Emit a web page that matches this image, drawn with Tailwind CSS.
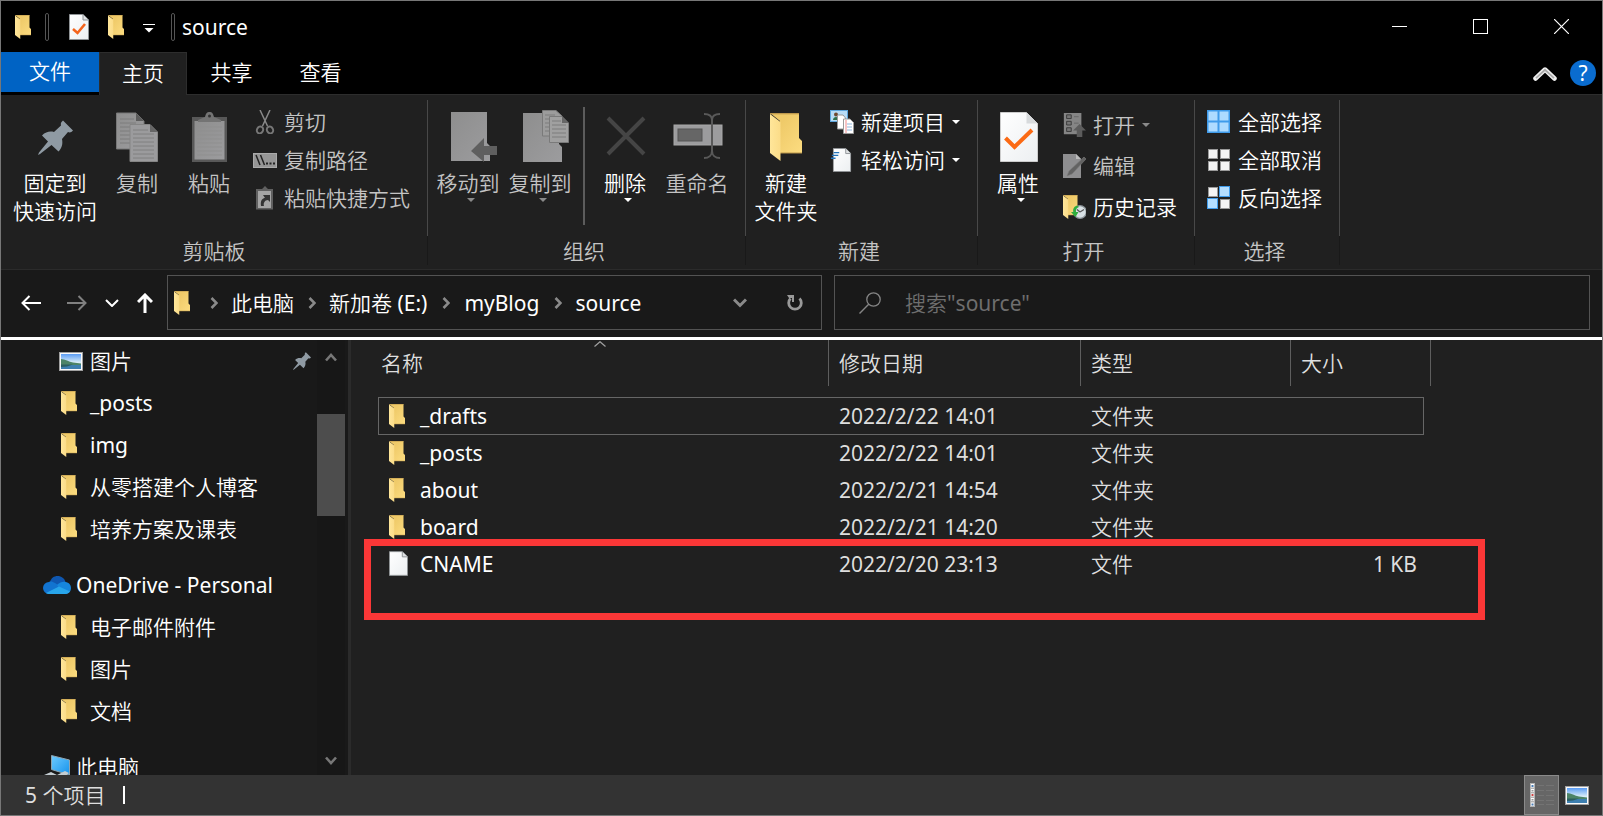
<!DOCTYPE html>
<html lang="zh-CN">
<head>
<meta charset="utf-8">
<title>source</title>
<script src="https://cdn.jsdelivr.net/npm/@tailwindcss/browser@4"></script>
</head>
<body class="h-screen overflow-hidden bg-[#202020] font-['Noto_Sans','Noto_Sans_CJK_SC_DemiLight','Noto_Sans_CJK_SC_Light','Noto_Sans_CJK_SC',sans-serif] text-[21px] leading-7 text-white">

<svg class="absolute size-0" aria-hidden="true">
  <defs>
    <linearGradient id="gBack" x1="0" y1="0" x2="1" y2="1"><stop offset="0.3" stop-color="#efca69"/><stop offset="1" stop-color="#fcdc80"/></linearGradient>
    <linearGradient id="gFlap" x1="0" y1="0" x2="1" y2="0"><stop offset="0" stop-color="#ffe69a"/><stop offset="1" stop-color="#fbdc88"/></linearGradient>
    <linearGradient id="gPage" x1="0" y1="0" x2="1" y2="1"><stop offset="0" stop-color="#ffffff"/><stop offset="1" stop-color="#eceff1"/></linearGradient>
    <linearGradient id="gGrey" x1="0" y1="0" x2="1" y2="1"><stop offset="0" stop-color="#8e8e8e"/><stop offset="1" stop-color="#9c9c9e"/></linearGradient>
    <linearGradient id="gSky" x1="0" y1="0" x2="0" y2="1"><stop offset="0" stop-color="#5b9df5"/><stop offset="0.55" stop-color="#d6ebf8"/><stop offset="1" stop-color="#e6f3f8"/></linearGradient>
    <linearGradient id="gScreen" x1="0" y1="0" x2="1" y2="1"><stop offset="0" stop-color="#6ecbff"/><stop offset="1" stop-color="#1492ec"/></linearGradient>
    <symbol id="folder" viewBox="0 0 32 48">
      <path d="M0 0H29V25L32 28V40H10V8Z" fill="url(#gBack)"/>
      <path d="M0 .7H29" stroke="#b8944a" stroke-width="1.2"/>
      <path d="M10 40H32" stroke="#b8944a" stroke-width="1"/>
      <path d="M0 1L10.500 9V48L0 40Z" fill="url(#gFlap)"/>
    </symbol>
    <symbol id="page" viewBox="0 0 20 26">
      <path d="M.5 .5H14L19.500 6V25.500H.5Z" fill="url(#gPage)" stroke="#8f9396"/>
      <path d="M14 .5V6H19.500" fill="#dfe2e4" stroke="#8f9396"/>
    </symbol>
    <symbol id="pin" viewBox="0 0 35 35">
      <path d="M25 .5L35 10.500C33.500 12.500 31.500 13 30 12L24 19C25 24 24 28 20.500 31.500L13.500 25L2 34L0 35L1 32.500L10 21.500L4 15.500C8 11.500 12 11 16 12L23 5.500C22.500 3.500 23 2 25 .5Z" fill="#8f9aa3"/>
    </symbol>
    <symbol id="photo" viewBox="0 0 24 19">
      <rect x=".5" y=".5" width="23" height="18" fill="#fafafa" stroke="#a0a0a0"/>
      <rect x="2" y="2" width="20" height="15" fill="url(#gSky)"/>
      <path d="M2 7C6 7 10 10 14 10.500L22 11.500V13H2Z" fill="#4c8468"/>
      <path d="M2 13H22V17H2Z" fill="#3d7fb0"/><path d="M2 12.500H14L8 14.500L2 15Z" fill="#2c5f62"/>
    </symbol>
    <symbol id="down" viewBox="0 0 8 4"><path d="M0 0H8L4 4Z" fill="currentColor"/></symbol>
    <symbol id="crumb" viewBox="0 0 8 12"><path d="M1.500 1L6.500 6L1.500 11" fill="none" stroke="#8a8a8a" stroke-width="2.600"/></symbol>
    <symbol id="tileW" viewBox="0 0 11 11"><rect x=".5" y=".5" width="10" height="10" fill="#f4f4f4" stroke="#9b9b9b"/></symbol>
    <symbol id="tileB" viewBox="0 0 11 11"><rect x=".5" y=".5" width="10" height="10" fill="#b4deff" stroke="#3f9bea"/></symbol>
  </defs>
</svg>

<div class="flex h-full flex-col border border-[#777]">

  <!-- Title bar -->
  <header class="flex h-[51px] shrink-0 items-center bg-black">
    <svg class="ml-[14px] h-6 w-4"><use href="#folder"/></svg>
    <span class="ml-[14px] h-7 w-1 rounded-sm border border-[#555]"></span>
    <button aria-label="属性" class="ml-5"><svg class="block h-[26px] w-5" viewBox="0 0 20 26"><use href="#page"/><path d="M4 15L8.500 19L16 10" fill="none" stroke="#f4641c" stroke-width="2.600"/></svg></button>
    <button aria-label="新建文件夹" class="ml-[19px]"><svg class="block h-6 w-4"><use href="#folder"/></svg></button>
    <button aria-label="自定义快速访问工具栏" class="ml-[19px] pt-[3px]"><svg class="block h-[9px] w-3" viewBox="0 0 12 9"><path d="M0 .5H12" stroke="#fff"/><path d="M1.500 4H10.500L6 8.500Z" fill="#fff"/></svg></button>
    <span class="ml-4 h-7 w-1 rounded-sm border border-[#555]"></span>
    <h1 class="ml-[7px] flex-1">source</h1>
    <button aria-label="最小化" class="flex h-full w-[81px] items-center justify-center"><svg class="size-[15px]" viewBox="0 0 15 15"><path d="M0 7.500H15" stroke="#fff"/></svg></button>
    <button aria-label="最大化" class="flex h-full w-[81px] items-center justify-center"><svg class="size-[15px]" viewBox="0 0 15 15"><rect x=".5" y=".5" width="14" height="14" fill="none" stroke="#fff"/></svg></button>
    <button aria-label="关闭" class="flex h-full w-[81px] items-center justify-center"><svg class="size-[15px]" viewBox="0 0 15 15"><path d="M0 0L15 15M15 0L0 15" stroke="#fff" stroke-width="1.200"/></svg></button>
  </header>

  <!-- Ribbon tabs -->
  <div class="flex h-[43px] shrink-0 bg-black">
    <button class="h-10 w-[98px] bg-[#0063c4] pb-[2px]">文件</button>
    <button class="w-[88px] border border-b-0 border-[#2d2d2d] bg-[#202020] pb-[2px]">主页</button>
    <button class="w-[89px] border-b border-[#2d2d2d] pb-[2px]">共享</button>
    <button class="w-[89px] border-b border-[#2d2d2d] pb-[2px]">查看</button>
    <div class="flex flex-1 items-center justify-end gap-[13px] border-b border-[#2d2d2d] pr-[6px]">
      <button aria-label="折叠功能区"><svg class="block h-[15px] w-6" viewBox="0 0 24 15"><path d="M2.500 12.500L12 3.500L21.500 12.500" fill="none" stroke="#f0f0f0" stroke-width="4.500" stroke-linecap="round" stroke-linejoin="round"/><path d="M3 12.200L12 3.800L21 12.200" fill="none" stroke="#aaa" stroke-width="1.800"/></svg></button>
      <button aria-label="帮助" class="flex size-[26px] items-center justify-center rounded-full bg-[#0a6ccf] leading-6">?</button>
    </div>
  </div>

  <!-- Ribbon -->
  <div class="flex h-[175px] shrink-0 border-b border-[#2b2b2b] bg-[#202020] pt-[5px] pb-1 text-[#c4c4c4]">

    <section class="flex flex-col">
      <div class="flex h-[136px] border-r border-[#484848] pr-[17px] pl-2 pt-[3px]">
        <button class="flex w-[92px] flex-col items-center text-white">
          <span class="flex h-[66px] items-center pt-[2px]"><svg class="size-[35px]"><use href="#pin"/></svg></span>
          <span>固定到<br>快速访问</span>
        </button>
        <button class="flex w-[72px] flex-col items-center">
          <span class="flex h-[66px] items-center pt-[2px]"><svg class="h-[50px] w-[42px]" viewBox="0 0 42 50">
            <path d="M.5 1H20L28 9V37H.5Z" fill="url(#gGrey)" stroke="#777"/><path d="M4 7H18M4 11H20M4 15H24M4 19H24M4 23H24M4 27H24M4 31H24" stroke="#7c7c7c"/><path d="M20 1V9H28Z" fill="#5c5c5c"/>
            <path d="M14 12.500H34L41.500 20V49.500H14Z" fill="#9b9b9d" stroke="#858585"/><path d="M17 18H32M17 22H38M17 26H38M17 30H38M17 34H38M17 38H38M17 42H38M17 46H38" stroke="#808080"/><path d="M34 12.500V20H41.500Z" fill="#666"/></svg></span>
          <span>复制</span>
        </button>
        <button class="flex w-[72px] flex-col items-center">
          <span class="flex h-[66px] items-center pt-[2px]"><svg class="h-[50px] w-[35px]" viewBox="0 0 35 50">
            <rect x="0" y="5" width="35" height="45" fill="#585858"/><rect x="2.500" y="9" width="30" height="38.500" fill="url(#gGrey)"/><path d="M5 15H30M5 19H30M5 23H30M5 27H30M5 31H30M5 35H30M5 39H30M5 43H30" stroke="#8f8f8f"/>
            <path d="M6 10V8L13 5C14 1 15 0 17.500 0S21 1 22 5L29 8V10Z" fill="#747474"/><circle cx="17.500" cy="4" r="1.500" fill="#333"/></svg></span>
          <span>粘贴</span>
        </button>
        <div class="flex flex-col pl-2">
          <button class="flex h-[38px] items-center gap-[7px]"><svg class="size-6" viewBox="0 0 24 24"><path d="M7 0L14.500 16M17 0L9.500 16" stroke="#898989" stroke-width="1.500"/><ellipse cx="7" cy="20" rx="3" ry="3.500" transform="rotate(30 7 20)" fill="none" stroke="#777" stroke-width="2"/><ellipse cx="17" cy="20" rx="3" ry="3.500" transform="rotate(-30 17 20)" fill="none" stroke="#777" stroke-width="2"/></svg>剪切</button>
          <button class="flex h-[38px] items-center gap-[7px]"><svg class="size-6" viewBox="0 0 24 24"><rect x=".5" y="5.500" width="23" height="14" fill="#969696" stroke="#aaa"/><path d="M3 7L7 17M7.500 7L11.500 17" stroke="#222" stroke-width="1.500"/><path d="M13 15.500H15M16.500 15.500H18.500M20 15.500H22" stroke="#222" stroke-width="2"/></svg>复制路径</button>
          <button class="flex h-[38px] items-center gap-[7px]"><svg class="size-6" viewBox="0 0 24 24"><path d="M3 3H9L12 0L15 3H20V23.500H3Z" fill="#606060"/><rect x="5" y="5" width="13" height="17" fill="#a4a4a4"/><path d="M8 20C7 14 10 12 12 12L10 9H17V16L15 14C12 14 10 17 11 20Z" fill="#333"/></svg>粘贴快捷方式</button>
        </div>
      </div>
      <div class="flex flex-1 items-center justify-center border-r border-[#191919]">剪贴板</div>
    </section>

    <section class="flex flex-col">
      <div class="flex h-[136px] border-r border-[#484848] pr-3 pl-1 pt-[3px]">
        <button class="flex w-[72px] flex-col items-center">
          <span class="flex h-[66px] items-center pt-[2px]"><svg class="ml-3 h-[50px] w-[46px]" viewBox="0 0 46 50"><path d="M0 0H36V31L39 34V49H0Z" fill="url(#gGrey)"/><path d="M20 39L33 26V34H46V43H33V50Z" fill="#5f5f5f"/></svg></span>
          <span>移动到</span>
          <svg class="mt-px ml-[6px] h-1 w-2 text-[#8a8a8a]"><use href="#down"/></svg>
        </button>
        <button class="flex w-[72px] flex-col items-center">
          <span class="flex h-[66px] items-center"><svg class="ml-3 h-[52px] w-[46px]" viewBox="0 0 46 52"><path d="M0 3H36V34L39 37V52H0Z" fill="url(#gGrey)"/><path d="M19.500 .5H33L39 6V26H19.500Z" fill="#9c9c9c" stroke="#7a7a7a"/><path d="M22 5H32M22 9H35M22 13H35M22 17H35M22 21H35" stroke="#7c7c7c"/><path d="M26.500 6.500H39L45.500 13V32.500H26.500Z" fill="#a0a0a0" stroke="#7a7a7a"/><path d="M29 11H38M29 15H43M29 19H43M29 23H43M29 27H43" stroke="#7c7c7c"/><path d="M39 6.500V13H45.500Z" fill="#666"/></svg></span>
          <span>复制到</span>
          <svg class="mt-px ml-[6px] h-1 w-2 text-[#8a8a8a]"><use href="#down"/></svg>
        </button>
        <span class="mt-1 mr-1 ml-[7px] h-[118px] w-[2px] bg-[#5c5c5c]"></span>
        <button class="flex w-[72px] flex-col items-center text-white">
          <span class="flex h-[66px] items-center"><svg class="ml-[2px] size-10" viewBox="0 0 40 40"><path d="M2 2L38 38M38 2L2 38" stroke="#454545" stroke-width="4"/></svg></span>
          <span>删除</span>
          <svg class="mt-px ml-[6px] h-1 w-2"><use href="#down"/></svg>
        </button>
        <button class="flex w-[72px] flex-col items-center">
          <span class="flex h-[66px] items-center"><svg class="ml-[2px] h-[46px] w-[50px]" viewBox="0 0 50 46"><rect x="1" y="12" width="48" height="20" fill="#9c9c9e" stroke="#a8a8a8"/><rect x="5" y="16" width="24" height="12" fill="#666" stroke="#555"/><path d="M31 1C36 1 39 3 39 7V38C39 42 36 45 31 45M47 1C42 1 39 3 39 7M39 38C39 42 42 45 47 45" fill="none" stroke="#595959" stroke-width="2"/></svg></span>
          <span>重命名</span>
        </button>
      </div>
      <div class="flex flex-1 items-center justify-center border-r border-[#191919] pr-[5px]">组织</div>
    </section>

    <section class="flex flex-col">
      <div class="flex h-[136px] border-r border-[#484848] pr-[17px] pt-[3px] text-white">
        <button class="flex w-20 flex-col items-center">
          <span class="flex h-[66px] items-center pt-[2px]"><svg class="h-12 w-8"><use href="#folder"/></svg></span>
          <span>新建<br>文件夹</span>
        </button>
        <div class="flex flex-col pl-1">
          <button class="flex h-[38px] items-center gap-[7px]"><svg class="size-6" viewBox="0 0 24 24"><rect x=".5" y=".5" width="17" height="11" fill="#b8dcf6" stroke="#5ea6dc"/><circle cx="6" cy="4.500" r="2" fill="#70492f"/><path d="M3 10C3 6 9 6 9 10Z" fill="#2f6f4b"/><path d="M7.500 5H13L15.500 8V19H7.500Z" fill="#fff" stroke="#9a9a9a"/><path d="M13.500 9H20L23.500 12.500V23.500H13.500Z" fill="#fff" stroke="#9a9a9a"/><path d="M16 10V23" stroke="#e88"/><path d="M17 14H22M17 17H22M17 20H22" stroke="#8fb6dd"/></svg>新建项目<svg class="h-1 w-2"><use href="#down"/></svg></button>
          <button class="flex h-[38px] items-center gap-[7px]"><svg class="size-6" viewBox="0 0 24 26"><svg x="2" y="0" width="20" height="26"><use href="#page"/></svg><path d="M3 5H9M1 8H8M0 11H5" stroke="#2374bb" stroke-width="1.600"/></svg>轻松访问<svg class="h-1 w-2"><use href="#down"/></svg></button>
        </div>
      </div>
      <div class="flex flex-1 items-center justify-center border-r border-[#191919] pr-[5px]">新建</div>
    </section>

    <section class="flex flex-col">
      <div class="flex h-[136px] border-r border-[#484848] pr-[17px] pl-1 pt-[3px]">
        <button class="flex w-[72px] flex-col items-center text-white">
          <span class="flex h-[66px] items-center pt-[2px]"><svg class="ml-[2px] h-[50px] w-[38px]" viewBox="0 0 38 50"><path d="M.5 .5H26.500L37.500 11.500V49.500H.5Z" fill="url(#gPage)" stroke="#ccc"/><path d="M26.500 .5V11.500H37.500Z" fill="#d7dadc"/><path d="M5.500 26L14.500 35L32 18" fill="none" stroke="#fb6a14" stroke-width="4"/></svg></span>
          <span>属性</span>
          <svg class="mt-px ml-[6px] h-1 w-2"><use href="#down"/></svg>
        </button>
        <div class="flex flex-col pt-px pl-2">
          <button class="flex h-[41px] items-center gap-[7px]"><svg class="size-6" viewBox="0 0 24 26"><rect x="1" y="0" width="19" height="23" fill="#858585"/><path d="M4 2H9V6H4ZM4 9H9V13H4ZM4 16H9V20H4Z" fill="#777" stroke="#383838"/><path d="M12 4H17M12 11H17" stroke="#666"/><path d="M18 12L25 19H21V26H15V19H11Z" fill="#5c5c5c"/></svg>打开<svg class="h-1 w-2 text-[#8a8a8a]"><use href="#down"/></svg></button>
          <button class="flex h-[41px] items-center gap-[7px]"><svg class="size-6" viewBox="0 0 24 24"><path d="M1 0H14L19 5V24H1Z" fill="#8e8e90"/><path d="M14 0V5H19Z" fill="#bbb"/><path d="M5 22L7 17L22 3L24 5L10 20Z" fill="#626262" stroke="#7c7c7c" stroke-width=".6"/></svg>编辑</button>
          <button class="flex h-[41px] items-center gap-[7px] text-white"><svg class="size-6" viewBox="0 0 24 24"><svg x="1" width="16" height="24"><use href="#folder"/></svg><circle cx="18" cy="17" r="6.300" fill="#d9e1e5" stroke="#8c9499" stroke-width="1.200"/><path d="M18 17L15 14.500M18 17L22 14.500" stroke="#555" stroke-width="1.200"/><path d="M15 10.500C11 12 11 15 11.500 17H9L13.500 22L16.500 17H14C14 15 14 13 17 12Z" fill="#2fae3d"/></svg>历史记录</button>
        </div>
      </div>
      <div class="flex flex-1 items-center justify-center border-r border-[#191919] pr-[5px]">打开</div>
    </section>

    <section class="flex flex-col">
      <div class="flex h-[136px] border-r border-[#484848] pr-[17px] pl-3 pt-[3px] text-white">
        <div class="flex flex-col">
          <button class="flex h-[38px] items-center gap-[7px]"><svg class="size-6" viewBox="0 0 24 24"><rect width="23" height="23" fill="#3f9bea"/><path d="M1.500 1.500H10.500V10.500H1.500ZM12.500 1.500H21.500V10.500H12.500ZM1.500 12.500H10.500V21.500H1.500ZM12.500 12.500H21.500V21.500H12.500Z" fill="#aedbff"/></svg>全部选择</button>
          <button class="flex h-[38px] items-center gap-[7px]"><svg class="size-6" viewBox="0 0 24 24"><use href="#tileW" x="1" y="1" width="10" height="10"/><use href="#tileW" x="13" y="1" width="10" height="10"/><use href="#tileW" x="1" y="13" width="10" height="10"/><use href="#tileW" x="13" y="13" width="10" height="10"/></svg>全部取消</button>
          <button class="flex h-[38px] items-center gap-[7px]"><svg class="size-6" viewBox="0 0 24 24"><use href="#tileW" x="1" y="1" width="10" height="10"/><use href="#tileB" x="12" width="11" height="11"/><use href="#tileB" x="0" y="12" width="11" height="11"/><use href="#tileW" x="13" y="13" width="10" height="10"/></svg>反向选择</button>
        </div>
      </div>
      <div class="flex flex-1 items-center justify-center border-r border-[#191919] pr-[5px]">选择</div>
    </section>
  </div>

  <!-- Navigation bar -->
  <div class="flex h-[70px] shrink-0 items-center border-b-[3px] border-white bg-[#191919] pr-3 pb-[2px]">
    <div class="flex w-[166px] shrink-0 items-center pl-5">
      <button aria-label="后退"><svg class="block h-4 w-5" viewBox="0 0 20 16"><path d="M20 8H1.500M8.500 1L1.500 8L8.500 15" fill="none" stroke="#fff" stroke-width="2"/></svg></button>
      <button aria-label="前进" class="ml-[26px]"><svg class="block h-4 w-5" viewBox="0 0 20 16"><path d="M0 8H18.500M11.500 1L18.500 8L11.500 15" fill="none" stroke="#808080" stroke-width="2"/></svg></button>
      <button aria-label="最近浏览的位置" class="ml-[18px]"><svg class="block h-2 w-[14px]" viewBox="0 0 14 8"><path d="M1 1L7 7L13 1" fill="none" stroke="#fff" stroke-width="2"/></svg></button>
      <button aria-label="上移" class="ml-[18px]"><svg class="block h-5 w-4" viewBox="0 0 16 20"><path d="M8 20V2M1 9L8 2L15 9" fill="none" stroke="#fff" stroke-width="3"/></svg></button>
    </div>
    <div class="grid flex-1 grid-cols-[655fr_756fr] gap-3">
      <div class="flex h-[55px] items-center border border-[#535353] pl-[6px]">
        <svg class="h-6 w-4"><use href="#folder"/></svg>
        <svg class="ml-5 h-3 w-2"><use href="#crumb"/></svg><button class="ml-[13px]">此电脑</button>
        <svg class="ml-[14px] h-3 w-2"><use href="#crumb"/></svg><button class="ml-[13px]">新加卷 (E:)</button>
        <svg class="ml-[15px] h-3 w-2"><use href="#crumb"/></svg><button class="ml-[14px]">myBlog</button>
        <svg class="ml-[15px] h-3 w-2"><use href="#crumb"/></svg><button class="ml-[13px]">source</button>
        <span class="flex-1"></span>
        <button aria-label="以前的位置"><svg class="block h-[10px] w-[14px]" viewBox="0 0 14 10"><path d="M1 1.500L7 7.500L13 1.500" fill="none" stroke="#8a8a8a" stroke-width="3"/></svg></button>
        <button aria-label="刷新" class="mr-[18px] ml-10"><svg class="block h-[18px] w-4" viewBox="0 0 16 18"><path d="M12.500 4.500A6.300 6.300 0 1 1 3.500 4.500" fill="none" stroke="#999" stroke-width="2.800"/><path d="M0 1H7V8H5V4H2Z" fill="#999"/></svg></button>
      </div>
      <label class="flex h-[55px] items-center border border-[#535353] pl-6">
        <svg class="h-[22px] w-[22px] shrink-0" viewBox="0 0 22 22"><circle cx="14.500" cy="7.500" r="6.700" fill="none" stroke="#858585" stroke-width="1.300"/><path d="M9.700 12.300L.5 21.500" stroke="#858585" stroke-width="1.400"/></svg>
        <input type="search" aria-label="搜索" placeholder='搜索"source"' class="ml-6 w-full bg-transparent outline-none placeholder:text-[#6e6e6e]">
      </label>
    </div>
  </div>

  <!-- Body -->
  <div class="flex min-h-0 flex-1">
    <aside class="flex w-[350px] shrink-0 overflow-hidden border-r-[3px] border-[#2b2b2b] bg-[#191919]">
      <nav class="flex-1 overflow-hidden">
        <a href="#" class="flex h-[42px] items-center gap-[7px] pr-[6px] pl-[58px]"><svg class="h-[19px] w-6"><use href="#photo"/></svg><span class="flex-1">图片</span><svg class="size-[18px]"><use href="#pin"/></svg></a>
        <a href="#" class="flex h-[42px] items-center gap-[7px] pl-[58px]"><span class="flex w-6 items-center pl-[2px]"><svg class="h-6 w-4"><use href="#folder"/></svg></span>_posts</a>
        <a href="#" class="flex h-[42px] items-center gap-[7px] pl-[58px]"><span class="flex w-6 items-center pl-[2px]"><svg class="h-6 w-4"><use href="#folder"/></svg></span>img</a>
        <a href="#" class="flex h-[42px] items-center gap-[7px] pl-[58px]"><span class="flex w-6 items-center pl-[2px]"><svg class="h-6 w-4"><use href="#folder"/></svg></span>从零搭建个人博客</a>
        <a href="#" class="flex h-[42px] items-center gap-[7px] pl-[58px]"><span class="flex w-6 items-center pl-[2px]"><svg class="h-6 w-4"><use href="#folder"/></svg></span>培养方案及课表</a>
        <a href="#" class="mt-[14px] flex h-[42px] items-center gap-[5px] pl-[42px]"><svg class="h-[18px] w-7" viewBox="0 0 28 18"><path d="M7 6C8 2 11 0 14.500 0C18.500 0 21.500 2.500 22.500 6L14 10Z" fill="#0f57b0"/><path d="M6 18A6 6 0 0 1 6 6C8 5 10 6 12 7L20 12L6 18Z" fill="#1274d0"/><path d="M14 9C17 6 20 5.500 22.500 6C26 6.500 28 9 28 12C28 15.500 25.500 18 22 18L17 14Z" fill="#1686dc"/><path d="M3 17L16 10.500L27 15.500C26 17 24.500 18 22 18H6C5 18 4 17.800 3 17Z" fill="#28a5ea"/></svg>OneDrive - Personal</a>
        <a href="#" class="flex h-[42px] items-center gap-[7px] pl-[58px]"><span class="flex w-6 items-center pl-[2px]"><svg class="h-6 w-4"><use href="#folder"/></svg></span>电子邮件附件</a>
        <a href="#" class="flex h-[42px] items-center gap-[7px] pl-[58px]"><span class="flex w-6 items-center pl-[2px]"><svg class="h-6 w-4"><use href="#folder"/></svg></span>图片</a>
        <a href="#" class="flex h-[42px] items-center gap-[7px] pl-[58px]"><span class="flex w-6 items-center pl-[2px]"><svg class="h-6 w-4"><use href="#folder"/></svg></span>文档</a>
        <a href="#" class="mt-[14px] flex h-[42px] items-center gap-[5px] pl-[42px]"><svg class="h-6 w-7" viewBox="0 0 28 24"><path d="M8.500 .5L26.500 5V20L8.500 14.500Z" fill="url(#gScreen)" stroke="#8fa3ae"/><path d="M1 20L8 17L14 20L22 16L26 18L20 23H4Z" fill="#c3ccd1"/></svg>此电脑</a>
      </nav>
      <div class="flex w-7 flex-col items-center bg-[#171717] pt-3 pb-[9px]">
        <svg class="h-[10px] w-3" viewBox="0 0 12 10"><path d="M1 8.500L6 3L11 8.500" fill="none" stroke="#777" stroke-width="2.600"/></svg>
        <span class="mt-[52px] h-[102px] w-7 bg-[#4d4d4d]"></span>
        <svg class="mt-auto h-[10px] w-3" viewBox="0 0 12 10"><path d="M1 1.500L6 7L11 1.500" fill="none" stroke="#777" stroke-width="2.600"/></svg>
      </div>
      <span class="w-[3px] bg-[#191919]"></span>
    </aside>

    <main class="relative flex-1 overflow-hidden bg-[#202020] pl-[27px]">
      <table class="w-[1053px] table-fixed border-separate border-spacing-0 text-left text-[#dedede]">
        <colgroup><col class="w-[451px]"><col class="w-[252px]"><col class="w-[210px]"><col class="w-[133px]"><col class="w-[7px]"></colgroup>
        <thead>
          <tr class="h-[46px]">
            <th class="relative border-r border-[#5e5e5e] py-0 pr-0 pl-[3px] font-normal">名称<svg class="absolute top-[1px] left-[216px] h-[6px] w-3" viewBox="0 0 12 6"><path d="M.5 5.500L6 .7L11.500 5.500" fill="none" stroke="#a0a0a0" stroke-width="1.200"/></svg></th>
            <th class="border-r border-[#5e5e5e] pl-[10px] font-normal">修改日期</th>
            <th class="border-r border-[#5e5e5e] pl-[10px] font-normal">类型</th>
            <th colspan="2" class="border-r border-[#5e5e5e] pl-[10px] font-normal">大小</th>
          </tr>
        </thead>
        <tbody>
          <tr><td colspan="5" class="h-[11px] p-0"></td></tr>
          <tr class="h-[38px]">
            <td class="border-y border-l border-[#666] p-0"><a href="#" class="flex items-center gap-[15px] pl-[10px] text-white"><svg class="h-6 w-4"><use href="#folder"/></svg>_drafts</a></td>
            <td class="border-y border-[#666] py-0 pr-0 pl-[10px]">2022/2/22 14:01</td>
            <td class="border-y border-[#666] py-0 pr-0 pl-[10px]">文件夹</td>
            <td class="border-y border-r border-[#666] p-0"></td>
          </tr>
          <tr class="h-[37px]">
            <td class="px-0 pt-0 pb-[2px]"><a href="#" class="flex items-center gap-[15px] pl-[11px] text-white"><svg class="h-6 w-4"><use href="#folder"/></svg>_posts</a></td>
            <td class="pt-0 pr-0 pb-[2px] pl-[10px]">2022/2/22 14:01</td><td class="pt-0 pr-0 pb-[2px] pl-[10px]">文件夹</td><td class="p-0"></td>
          </tr>
          <tr class="h-[37px]">
            <td class="px-0 pt-0 pb-[2px]"><a href="#" class="flex items-center gap-[15px] pl-[11px] text-white"><svg class="h-6 w-4"><use href="#folder"/></svg>about</a></td>
            <td class="pt-0 pr-0 pb-[2px] pl-[10px]">2022/2/21 14:54</td><td class="pt-0 pr-0 pb-[2px] pl-[10px]">文件夹</td><td class="p-0"></td>
          </tr>
          <tr class="h-[37px]">
            <td class="px-0 pt-0 pb-[2px]"><a href="#" class="flex items-center gap-[15px] pl-[11px] text-white"><svg class="h-6 w-4"><use href="#folder"/></svg>board</a></td>
            <td class="pt-0 pr-0 pb-[2px] pl-[10px]">2022/2/21 14:20</td><td class="pt-0 pr-0 pb-[2px] pl-[10px]">文件夹</td><td class="p-0"></td>
          </tr>
          <tr class="h-[37px]">
            <td class="px-0 pt-0 pb-[2px]"><a href="#" class="flex items-center gap-3 pl-[11px] text-white"><svg class="h-[25px] w-[19px]"><use href="#page"/></svg>CNAME</a></td>
            <td class="pt-0 pr-0 pb-[2px] pl-[10px]">2022/2/20 23:13</td><td class="pt-0 pr-0 pb-[2px] pl-[10px]">文件</td><td class="pt-0 pr-[7px] pb-[2px] pl-0 text-right">1 KB</td>
          </tr>
        </tbody>
      </table>
      <!-- Highlight frame around the CNAME row -->
      <div class="pointer-events-none absolute top-[199px] left-[13px] h-[81px] w-[1121px] border-[7px] border-[#fb3737]"></div>
    </main>
  </div>

  <!-- Status bar -->
  <footer class="flex h-10 shrink-0 items-center bg-[#333] pl-6 text-[#dedede]">
    <span>5 个项目</span>
    <span class="ml-[18px] h-[18px] w-[2px] bg-white"></span>
    <span class="flex-1"></span>
    <button aria-label="详细信息" class="flex h-full w-[35px] items-center justify-center border border-[#8a8a8a] bg-[#666]"><svg class="h-6 w-6" viewBox="0 0 24 24"><rect width="5" height="24" fill="#b5b5b5"/><path d="M1 1H4V4.500H1ZM1 6H4V9H1ZM1 10.500H4V13.500H1ZM1 15H4V18H1ZM1 19.500H4V23H1Z" fill="#fff"/><path d="M1.500 2H3.500V4H1.500ZM1.500 20.500H3.500V22.500H1.500Z" fill="#4b7eb5"/><path d="M1.500 7H3.500V8.500H1.500ZM1.500 16H3.500V17.500H1.500Z" fill="#999"/><path d="M1.500 11H3.500V13H1.500Z" fill="#c44"/><path d="M7 2.500H14M16 2.500H24M7 7.500H14M16 7.500H24M7 12.500H14M16 12.500H24M7 17.500H14M16 17.500H24M7 21.500H14M16 21.500H24" stroke="#737373"/></svg></button>
    <button aria-label="大图标" class="mr-[13px] ml-[6px]"><svg class="block h-[19px] w-6"><use href="#photo"/></svg></button>
  </footer>
</div>
</body>
</html>
